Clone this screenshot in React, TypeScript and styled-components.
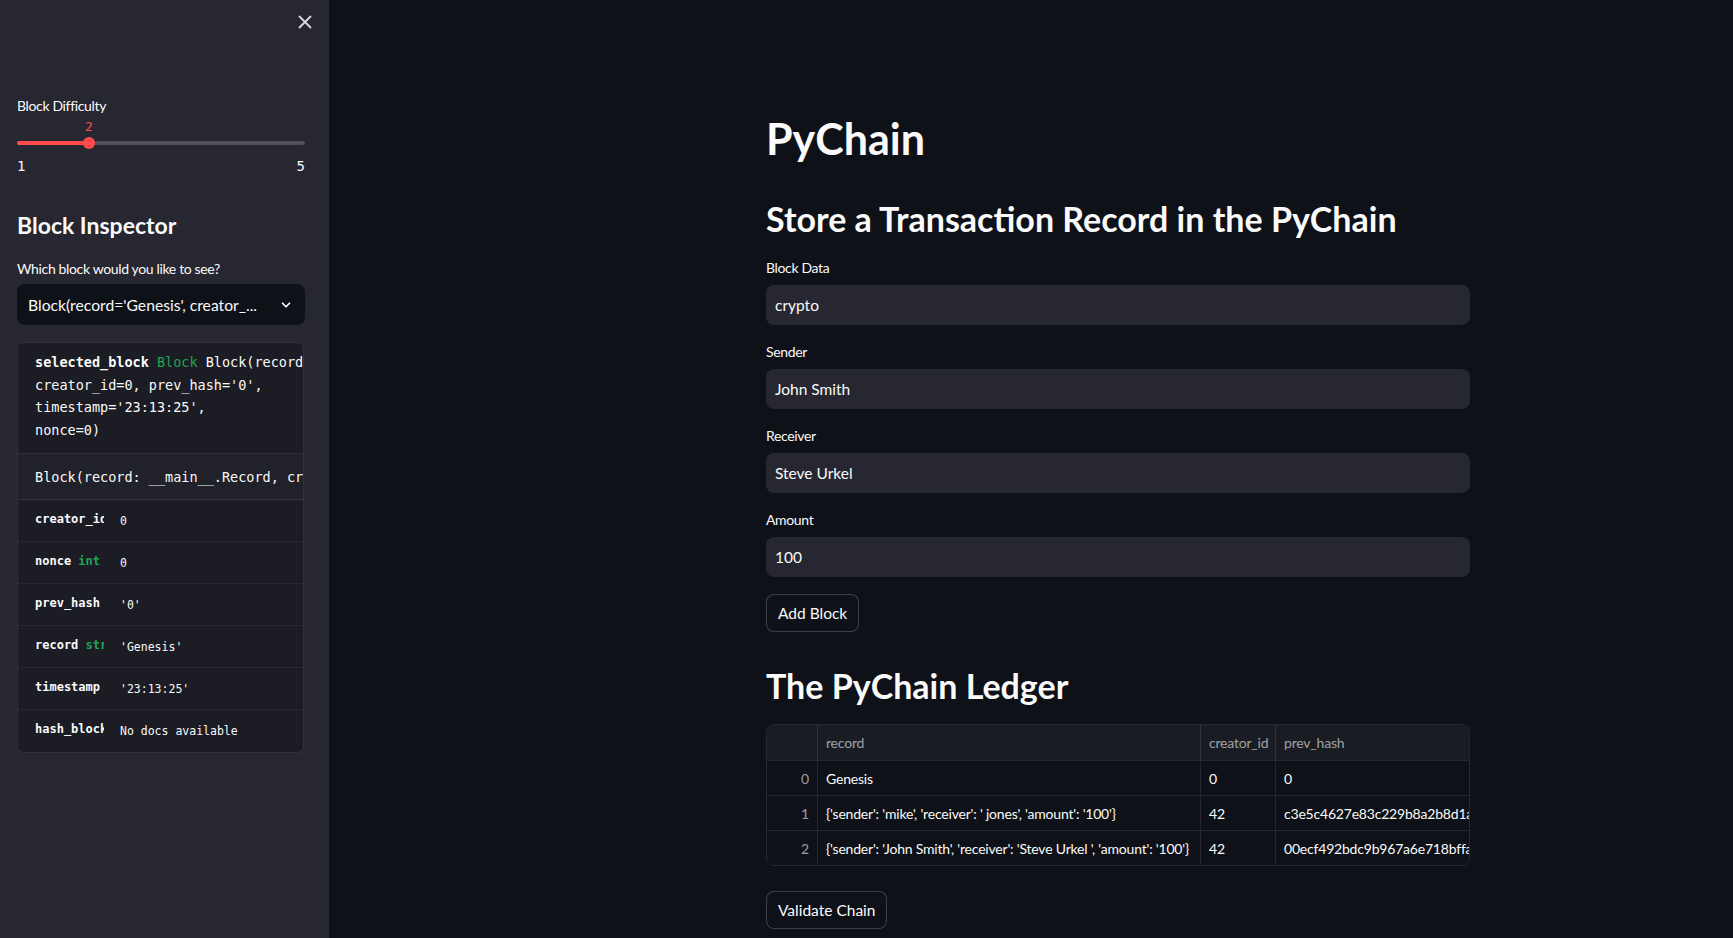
import React from "react";
import styled, { createGlobalStyle } from "styled-components";

const GlobalStyle = createGlobalStyle`
  html, body { margin: 0; padding: 0; background: #0e1117; }
  body { font-family: Lato, "Noto Sans", sans-serif; color: rgb(250,250,250); }
  * { box-sizing: border-box; }
`;

const SANS = `Lato, "Noto Sans", sans-serif`;
const MONO = `"DejaVu Sans Mono", "Liberation Mono", monospace`;

const Shell = styled.div`
  display: flex;
  width: 1733px;
  height: 938px;
  overflow: hidden;
  background: #0e1117;
`;

const Sidebar = styled.aside`
  width: 329px;
  flex: none;
  background: #262730;
  padding: 0 24px 0 17px;
  display: flex;
  flex-direction: column;
  overflow: hidden;
`;

const SidebarTop = styled.div`
  height: 44px;
  display: flex;
  justify-content: flex-end;
  align-items: center;
  margin-right: -11px;
`;

const CloseButton = styled.button`
  width: 22px;
  height: 22px;
  border: none;
  background: transparent;
  padding: 0;
  display: flex;
  align-items: center;
  justify-content: center;
  color: rgba(250,250,250,0.85);
  cursor: pointer;
`;

const Label = styled.div<{ $top?: number }>`
  font-family: ${SANS};
  font-size: 14px;
  letter-spacing: -0.35px;
  line-height: 20px;
  color: rgb(250,250,250);
  margin-top: ${(p) => p.$top ?? 0}px;
`;

const SliderBox = styled.div`
  position: relative;
  height: 68px;
`;

const SliderTrack = styled.div`
  position: absolute;
  left: 0;
  right: 0;
  top: 25px;
  height: 4px;
  border-radius: 2px;
  background: rgba(250,250,250,0.2);
`;

const SliderFill = styled.div`
  position: absolute;
  left: 0;
  top: 0;
  bottom: 0;
  border-radius: 2px;
  background: #ff4b4b;
`;

const SliderThumb = styled.div`
  position: absolute;
  top: 21px;
  width: 12px;
  height: 12px;
  margin-left: -6px;
  border-radius: 50%;
  background: #ff4b4b;
`;

const SliderValue = styled.div`
  position: absolute;
  top: 2px;
  transform: translateX(-50%);
  font-family: ${MONO};
  font-size: 13px;
  line-height: 18px;
  color: #ff4b4b;
`;

const SliderTicks = styled.div`
  position: absolute;
  left: 0;
  right: 0;
  top: 41px;
  display: flex;
  justify-content: space-between;
  font-family: ${MONO};
  font-size: 14px;
  line-height: 18px;
  color: rgb(250,250,250);
`;

const SideHeading = styled.h2`
  margin: 26px 0 0;
  font-family: ${SANS};
  font-weight: 700;
  font-size: 23px;
  line-height: 30px;
`;

const SelectBox = styled.div`
  margin-top: 5px;
  height: 41px;
  border-radius: 8px;
  background: #0e1117;
  display: flex;
  align-items: center;
  padding: 0 12px 0 11px;
  font-family: ${SANS};
  font-size: 15.7px;
  color: rgb(250,250,250);
`;

const SelectText = styled.span`
  flex: 1;
  white-space: nowrap;
`;

const Inspect = styled.div`
  margin-top: 17px;
  border: 1px solid rgba(250,250,250,0.1);
  border-radius: 6px;
  background: #1b1c24;
  overflow: hidden;
  margin-right: 1px;
`;

const InspectHead = styled.div`
  padding: 8px 0 12px 17px;
  font-family: ${MONO};
  font-size: 13.5px;
  line-height: 22.5px;
  white-space: pre;
  color: rgb(250,250,250);
  border-bottom: 1px solid rgba(250,250,250,0.1);
`;

const Bold = styled.span`
  font-weight: 700;
`;

const TypeTag = styled.span`
  color: #21a356;
`;

const InspectDoc = styled.div`
  height: 46px;
  display: flex;
  align-items: center;
  padding-left: 17px;
  background: #202129;
  font-family: ${MONO};
  font-size: 13.5px;
  white-space: pre;
  border-bottom: 1px solid rgba(250,250,250,0.1);
`;

const AttrRow = styled.div<{ $last?: boolean }>`
  height: 42px;
  display: grid;
  grid-template-columns: 69px 1fr;
  column-gap: 16px;
  align-items: center;
  padding-left: 17px;
  border-bottom: ${(p) => (p.$last ? "none" : "1px dotted rgba(250,250,250,0.12)")};
`;

const AttrName = styled.div`
  font-family: ${MONO};
  font-size: 12px;
  font-weight: 700;
  white-space: nowrap;
  overflow: hidden;
  margin-top: -4px;
`;

const AttrValue = styled.div`
  font-family: ${MONO};
  font-size: 11.5px;
  white-space: nowrap;
`;

const Main = styled.main`
  flex: 1;
  padding: 112px 263px 0 437px;
  display: flex;
  flex-direction: column;
  align-items: flex-start;
`;

const Title = styled.h1`
  margin: 0;
  font-family: ${SANS};
  font-weight: 700;
  font-size: 43px;
  line-height: 53px;
`;

const H2 = styled.h2<{ $top: number }>`
  margin: ${(p) => p.$top}px 0 0;
  font-family: ${SANS};
  font-weight: 700;
  font-size: 34px;
  line-height: 43px;
`;

const Field = styled.div<{ $top: number }>`
  width: 100%;
  margin-top: ${(p) => p.$top}px;
  display: flex;
  flex-direction: column;
  gap: 7px;
`;

const Input = styled.div`
  height: 40px;
  border-radius: 8px;
  background: #262730;
  display: flex;
  align-items: center;
  padding-left: 9px;
  font-family: ${SANS};
  font-size: 15.5px;
  color: rgb(250,250,250);
`;

const Button = styled.button<{ $top: number }>`
  margin-top: ${(p) => p.$top}px;
  height: 38px;
  padding: 0 11px;
  border-radius: 8px;
  border: 1px solid rgba(250,250,250,0.2);
  background: #0e1117;
  color: rgb(250,250,250);
  font-family: ${SANS};
  font-size: 15.5px;
`;

const Table = styled.div`
  margin-top: 17px;
  width: 100%;
  border: 1px solid rgba(250,250,250,0.1);
  border-radius: 8px;
  overflow: hidden;
`;

const TRow = styled.div<{ $head?: boolean }>`
  display: grid;
  grid-template-columns: 50px 383px 75px 1fr;
  height: 35px;
  background: ${(p) => (p.$head ? "#1a1c23" : "#0e1117")};
  border-top: ${(p) => (p.$head ? "none" : "1px solid rgba(250,250,250,0.1)")};
`;

const Cell = styled.div<{ $head?: boolean; $index?: boolean }>`
  display: flex;
  align-items: center;
  justify-content: ${(p) => (p.$index ? "flex-end" : "flex-start")};
  padding: 0 8px;
  font-family: ${SANS};
  font-size: 14px;
  letter-spacing: -0.2px;
  white-space: nowrap;
  overflow: hidden;
  color: ${(p) => (p.$head || p.$index ? "rgba(250,250,250,0.6)" : "rgb(250,250,250)")};
  & + & { border-left: 1px solid rgba(250,250,250,0.1); }
`;

const attrs: { name: React.ReactNode; value: string }[] = [
  { name: "creator_id", value: "0" },
  { name: <>nonce <TypeTag>int</TypeTag></>, value: "0" },
  { name: "prev_hash", value: "'0'" },
  { name: <>record <TypeTag>str</TypeTag></>, value: "'Genesis'" },
  { name: "timestamp", value: "'23:13:25'" },
  { name: "hash_block", value: "No docs available" },
];

const rows = [
  ["0", "Genesis", "0", "0"],
  ["1", "{'sender': 'mike', 'receiver': ' jones', 'amount': '100'}", "42", "c3e5c4627e83c229b8a2b8d1a43a7f2c"],
  ["2", "{'sender': 'John Smith', 'receiver': 'Steve Urkel ', 'amount': '100'}", "42", "00ecf492bdc9b967a6e718bffa98c4b1"],
];

const fields = [
  ["Block Data", "crypto"],
  ["Sender", "John Smith"],
  ["Receiver", "Steve Urkel"],
  ["Amount", "100"],
];

export default function App() {
  return (
    <Shell>
      <GlobalStyle />
      <Sidebar>
        <SidebarTop>
          <CloseButton aria-label="Close sidebar">
            <svg width="14" height="14" viewBox="0 0 14 14" fill="none" stroke="currentColor" strokeWidth="1.8" strokeLinecap="round">
              <path d="M1.5 1.5 L12.5 12.5 M12.5 1.5 L1.5 12.5" />
            </svg>
          </CloseButton>
        </SidebarTop>
        <Label $top={52}>Block Difficulty</Label>
        <SliderBox>
          <SliderTrack>
            <SliderFill style={{ width: "25%" }} />
          </SliderTrack>
          <SliderThumb style={{ left: "25%" }} />
          <SliderValue style={{ left: "25%" }}>2</SliderValue>
          <SliderTicks>
            <span>1</span>
            <span>5</span>
          </SliderTicks>
        </SliderBox>
        <SideHeading>Block Inspector</SideHeading>
        <Label $top={19}>Which block would you like to see?</Label>
        <SelectBox>
          <SelectText>Block(record='Genesis', creator_...</SelectText>
          <svg width="14" height="14" viewBox="0 0 24 24" fill="none" stroke="rgb(250,250,250)" strokeWidth="3" strokeLinecap="round" strokeLinejoin="round">
            <path d="M6 9l6 6 6-6" />
          </svg>
        </SelectBox>
        <Inspect>
          <InspectHead>
            <Bold>selected_block</Bold> <TypeTag>Block</TypeTag> Block(record='Genesis',{"\n"}creator_id=0, prev_hash='0',{"\n"}timestamp='23:13:25',{"\n"}nonce=0)
          </InspectHead>
          <InspectDoc>Block(record: __main__.Record, creator_id: int, prev_hash: str)</InspectDoc>
          {attrs.map((a, i) => (
            <AttrRow key={i} $last={i === attrs.length - 1}>
              <AttrName>{a.name}</AttrName>
              <AttrValue>{a.value}</AttrValue>
            </AttrRow>
          ))}
        </Inspect>
      </Sidebar>
      <Main>
        <Title>PyChain</Title>
        <H2 $top={32}>Store a Transaction Record in the PyChain</H2>
        {fields.map(([label, value], i) => (
          <Field key={label} $top={i === 0 ? 18 : 17}>
            <Label>{label}</Label>
            <Input>{value}</Input>
          </Field>
        ))}
        <Button $top={17}>Add Block</Button>
        <H2 $top={32}>The PyChain Ledger</H2>
        <Table>
          <TRow $head>
            <Cell $head />
            <Cell $head>record</Cell>
            <Cell $head>creator_id</Cell>
            <Cell $head>prev_hash</Cell>
          </TRow>
          {rows.map((r) => (
            <TRow key={r[0]}>
              <Cell $index>{r[0]}</Cell>
              <Cell>{r[1]}</Cell>
              <Cell>{r[2]}</Cell>
              <Cell>{r[3]}</Cell>
            </TRow>
          ))}
        </Table>
        <Button $top={25}>Validate Chain</Button>
      </Main>
    </Shell>
  );
}
